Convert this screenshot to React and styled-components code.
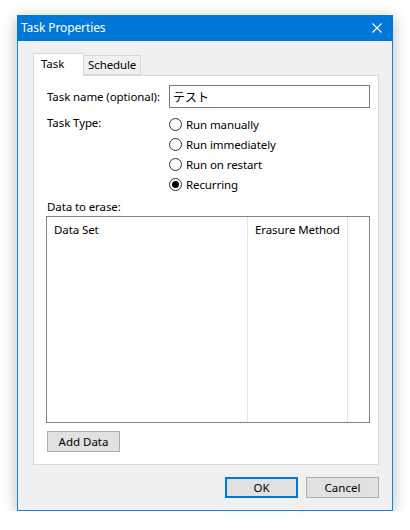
import React from 'react';
import styled, { createGlobalStyle } from 'styled-components';

const GlobalStyle = createGlobalStyle`
  html, body {
    margin: 0;
    padding: 0;
    background: #ffffff;
  }
  body {
    font-family: "Noto Sans", "Noto Sans CJK JP", sans-serif;
    font-size: 11.5px;
    letter-spacing: -0.1px;
    color: #000000;
  }
`;

const Page = styled.div`
  padding: 15px 0 0 17px;
`;

const Window = styled.div`
  box-sizing: border-box;
  width: 376px;
  height: 496px;
  display: flex;
  flex-direction: column;
  background: #f0f0f0;
  border: 1px solid #1883d7;
  border-top: none;
  box-shadow: 0 3px 14px rgba(0, 0, 0, 0.28);
`;

const TitleBar = styled.div`
  height: 26px;
  margin: 0 -1px;
  display: flex;
  align-items: center;
  justify-content: space-between;
  background: #0078d7;
  color: #ffffff;
  padding: 0 11px 0 4px;
`;

const Title = styled.span`
  font-size: 12px;
  line-height: 1;
`;

const CloseIcon = () => (
  <svg width="10" height="10" viewBox="0 0 10 10">
    <path d="M0.5 0.5 L9.5 9.5 M9.5 0.5 L0.5 9.5" stroke="#ffffff" strokeWidth="1.1" fill="none" />
  </svg>
);

const Body = styled.div`
  flex: 1;
  display: flex;
  flex-direction: column;
  padding: 12px 13px 12px 15px;
`;

const TabStrip = styled.div`
  display: flex;
  align-items: flex-end;
  height: 22px;
  position: relative;
  z-index: 1;
`;

const Tab = styled.div`
  box-sizing: border-box;
  width: ${p => p.$w}px;
  height: ${p => (p.$active ? '23px' : '20px')};
  margin-bottom: ${p => (p.$active ? '-1px' : '0')};
  padding: ${p => (p.$active ? '2px 0 0 7px' : '1px 0 0 4px')};
  background: ${p => (p.$active ? '#ffffff' : '#f0f0f0')};
  border: 1px solid #d9d9d9;
  border-bottom: ${p => (p.$active ? 'none' : '1px solid #d9d9d9')};
  border-left: ${p => (p.$active ? '1px solid #d9d9d9' : 'none')};
  line-height: 16px;
  white-space: nowrap;
`;

const TabPanel = styled.div`
  flex: 1;
  display: flex;
  flex-direction: column;
  background: #ffffff;
  border: 1px solid #d9d9d9;
  padding: 9px 7px 12px 13px;
`;

const FieldRow = styled.div`
  display: flex;
  align-items: ${p => (p.$top ? 'flex-start' : 'center')};
`;

const Label = styled.div`
  width: 122px;
  flex-shrink: 0;
  line-height: 16px;
  margin-top: ${p => p.$mt || 0}px;
`;

const TextInput = styled.div`
  box-sizing: border-box;
  width: 201px;
  height: 23px;
  border: 1px solid #7a7a7a;
  padding: 0 3px;
  display: flex;
  align-items: center;
  font-family: "Noto Sans CJK JP", sans-serif;
  font-size: 12px;
  letter-spacing: 0;
`;

const RadioGroup = styled.div`
  display: flex;
  flex-direction: column;
  margin-top: 6px;
`;

const RadioRow = styled.div`
  height: 20px;
  display: flex;
  align-items: center;
  gap: 4px;
`;

const RadioCircle = styled.span`
  box-sizing: border-box;
  width: 13px;
  height: 13px;
  border-radius: 50%;
  border: 1px solid #333333;
  display: flex;
  align-items: center;
  justify-content: center;
  &::after {
    content: '';
    display: ${p => (p.$checked ? 'block' : 'none')};
    width: 7px;
    height: 7px;
    border-radius: 50%;
    background: #000000;
  }
`;

const SectionLabel = styled.div`
  margin: 5px 0 1px 0;
  line-height: 16px;
`;

const ListView = styled.div`
  box-sizing: border-box;
  margin-left: -1px;
  width: 324px;
  height: 207px;
  border: 1px solid #828282;
  display: flex;
`;

const Column = styled.div`
  box-sizing: border-box;
  width: ${p => p.$w}px;
  height: 100%;
  border-right: ${p => (p.$last ? 'none' : '1px solid #e5e5e5')};
  padding: 4px 0 0 7px;
  line-height: 18px;
  white-space: nowrap;
  flex-shrink: 0;
  flex-grow: ${p => (p.$last ? 1 : 0)};
`;

const Button = styled.button`
  box-sizing: border-box;
  width: 73px;
  height: 21px;
  padding: 0;
  font-family: "Noto Sans", sans-serif;
  font-size: 11.5px;
  color: #000000;
  background: #e1e1e1;
  border: ${p => (p.$default ? '2px solid #0078d7' : '1px solid #adadad')};
`;

const PanelFooter = styled.div`
  margin-top: 8px;
`;

const DialogFooter = styled.div`
  margin-top: 12px;
  display: flex;
  justify-content: flex-end;
  gap: 8px;
`;

const radios = [
  { label: 'Run manually' },
  { label: 'Run immediately' },
  { label: 'Run on restart' },
  { label: 'Recurring', checked: true },
];

export default function App() {
  return (
    <>
      <GlobalStyle />
      <Page>
        <Window>
          <TitleBar>
            <Title>Task Properties</Title>
            <CloseIcon />
          </TitleBar>
          <Body>
            <TabStrip>
              <Tab $active $w={51}>Task</Tab>
              <Tab $w={57}>Schedule</Tab>
            </TabStrip>
            <TabPanel>
              <FieldRow>
                <Label>Task name (optional):</Label>
                <TextInput>テスト</TextInput>
              </FieldRow>
              <FieldRow $top>
                <Label $mt={7}>Task Type:</Label>
                <RadioGroup>
                  {radios.map(r => (
                    <RadioRow key={r.label}>
                      <RadioCircle $checked={r.checked} />
                      {r.label}
                    </RadioRow>
                  ))}
                </RadioGroup>
              </FieldRow>
              <SectionLabel>Data to erase:</SectionLabel>
              <ListView>
                <Column $w={201}>Data Set</Column>
                <Column $w={100}>Erasure Method</Column>
                <Column $last />
              </ListView>
              <PanelFooter>
                <Button>Add Data</Button>
              </PanelFooter>
            </TabPanel>
            <DialogFooter>
              <Button $default>OK</Button>
              <Button>Cancel</Button>
            </DialogFooter>
          </Body>
        </Window>
      </Page>
    </>
  );
}
